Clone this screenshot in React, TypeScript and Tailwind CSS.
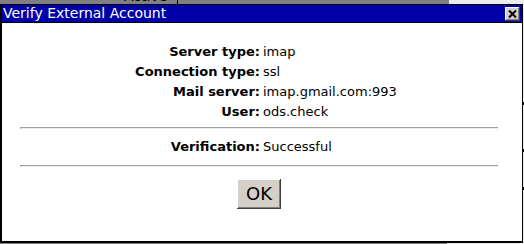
const rows = [
  { label: 'Server type:', value: 'imap' },
  { label: 'Connection type:', value: 'ssl' },
  { label: 'Mail server:', value: 'imap.gmail.com:993' },
  { label: 'User:', value: 'ods.check' },
];

function Hr() {
  return <div className="ml-[18px] w-[478px] h-[2px] border-t border-t-[#a0a0a0] border-b border-b-[#ececec] border-l border-l-[#808080]" />;
}

function Field({ label, value }: { label: string; value: string }) {
  return (
    <div className="grid grid-cols-[258px_1fr] gap-x-[3px]">
      <span className="font-bold text-right">{label}</span>
      <span>{value}</span>
    </div>
  );
}

export default function App() {
  return (
    <div className="w-[524px] h-[244px] overflow-hidden bg-[#f0f0f0] font-['DejaVu_Sans',Verdana,sans-serif] text-black">
      {/* page behind the dialog */}
      <div className="flex h-[4px] overflow-hidden">
        <div className="w-[449px] bg-[#808080] overflow-hidden">
          <div className="-mt-[12px] pl-[124px] flex items-start gap-[10px] text-[14px] leading-[16px]">
            <span>Active</span>
            <span className="mt-[2px] w-[11px] h-[14px] border-l border-black" />
          </div>
        </div>
        <div className="flex-1 bg-[#ececec]" />
      </div>

      <div className="flex">
        <div className="w-[523px] h-[239px] flex flex-col bg-white border-l-2 border-r border-t border-b-2 border-black">
          {/* title bar */}
          <div className="h-[18px] flex items-center justify-between bg-[#0000a8] border-b border-black pl-[1px] pr-[2px]">
            <span className="text-white text-[14px] leading-[17px]">Verify External Account</span>
            <button className="w-[15px] h-[14px] flex items-center justify-center bg-[#d4d0c8] shadow-[inset_-1px_-1px_#404040,inset_1px_1px_#ffffff,inset_-2px_-2px_#808080]">
              <svg width="9" height="8" viewBox="0 0 9 8">
                <path d="M1 0.5 L8 7.5 M8 0.5 L1 7.5" stroke="#000" strokeWidth="2" />
              </svg>
            </button>
          </div>

          {/* body */}
          <div className="flex flex-col pt-[19px] text-[13px] leading-[20px]">
            {rows.map((r) => (
              <Field key={r.label} label={r.label} value={r.value} />
            ))}
            <div className="mt-[5px]">
              <Hr />
            </div>
            <div className="mt-[8px]">
              <Field label="Verification:" value="Successful" />
            </div>
            <div className="mt-[8px]">
              <Hr />
            </div>
            <button className="mt-[12px] ml-[235px] w-[44px] h-[30px] flex items-center justify-center bg-[#d4d0c8] text-[18px] leading-none shadow-[inset_-1px_-1px_#404040,inset_1px_1px_#ffffff,inset_-2px_-2px_#808080]">
              OK
            </button>
          </div>
        </div>
        {/* right edge of page behind */}
        <div className="w-[1px] flex flex-col bg-[#f0f0f0]">
          <div className="h-[98px]" />
          <div className="h-[3px] bg-black" />
          <div className="h-[44px]" />
          <div className="h-[3px] bg-black" />
          <div className="h-[35px]" />
          <div className="h-[3px] bg-black" />
        </div>
      </div>
      <div className="flex h-[1px]">
        <div className="w-[447px] bg-[#808080]" />
      </div>
    </div>
  );
}
